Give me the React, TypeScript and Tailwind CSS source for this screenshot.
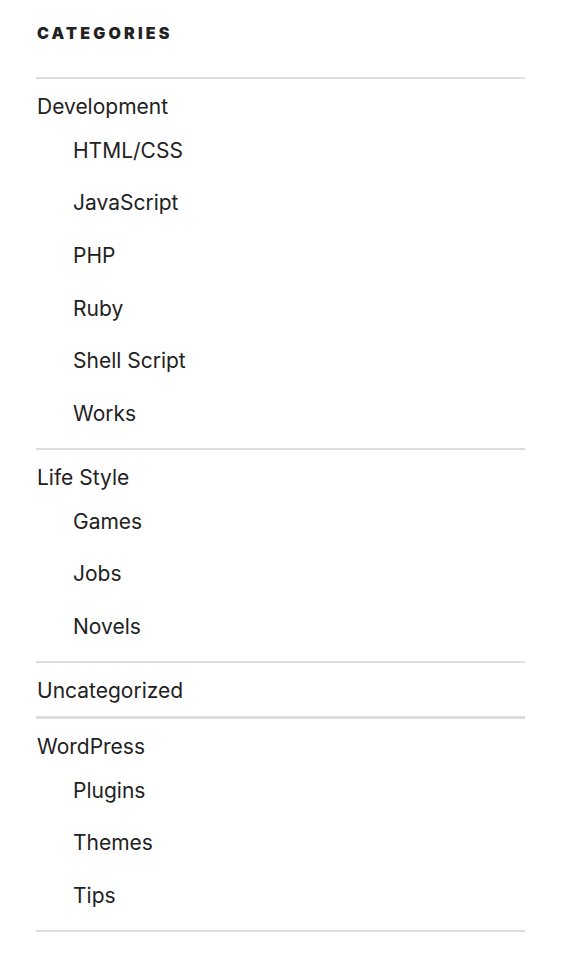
import React from 'react';

interface Category {
  name: string;
  children?: string[];
}

const categories: Category[] = [
  { name: 'Development', children: ['HTML/CSS', 'JavaScript', 'PHP', 'Ruby', 'Shell Script', 'Works'] },
  { name: 'Life Style', children: ['Games', 'Jobs', 'Novels'] },
  { name: 'Uncategorized' },
  { name: 'WordPress', children: ['Plugins', 'Themes', 'Tips'] },
];

const App: React.FC = () => {
  return (
    <div className="min-h-screen bg-white" style={{ fontFamily: 'Inter, "Liberation Sans", sans-serif' }}>
      <section className="ml-9 w-[489px] pt-[23px]">
        <h2 className="pl-px text-[16px] leading-[20px] font-black uppercase tracking-[0.2em] text-[#222] mb-[34px]">
          Categories
        </h2>
        <ul className="border-b-2 border-[#ddd]">
          {categories.map((cat) => (
            <li
              key={cat.name}
              className={`border-[#ddd] pt-[10px] pb-[8px] ${cat.name === 'WordPress' ? 'border-t-[3px]' : 'border-t-2'}`}
            >
              <a className="block pl-px text-[21px] leading-[35px] text-[#222]">{cat.name}</a>
              {cat.children && (
                <ul className="pl-9">
                  {cat.children.map((child) => (
                    <li key={child} className="py-[8.83px]">
                      <a className="block pl-px text-[21px] leading-[35px] text-[#222]">{child}</a>
                    </li>
                  ))}
                </ul>
              )}
            </li>
          ))}
        </ul>
      </section>
    </div>
  );
};

export default App;
